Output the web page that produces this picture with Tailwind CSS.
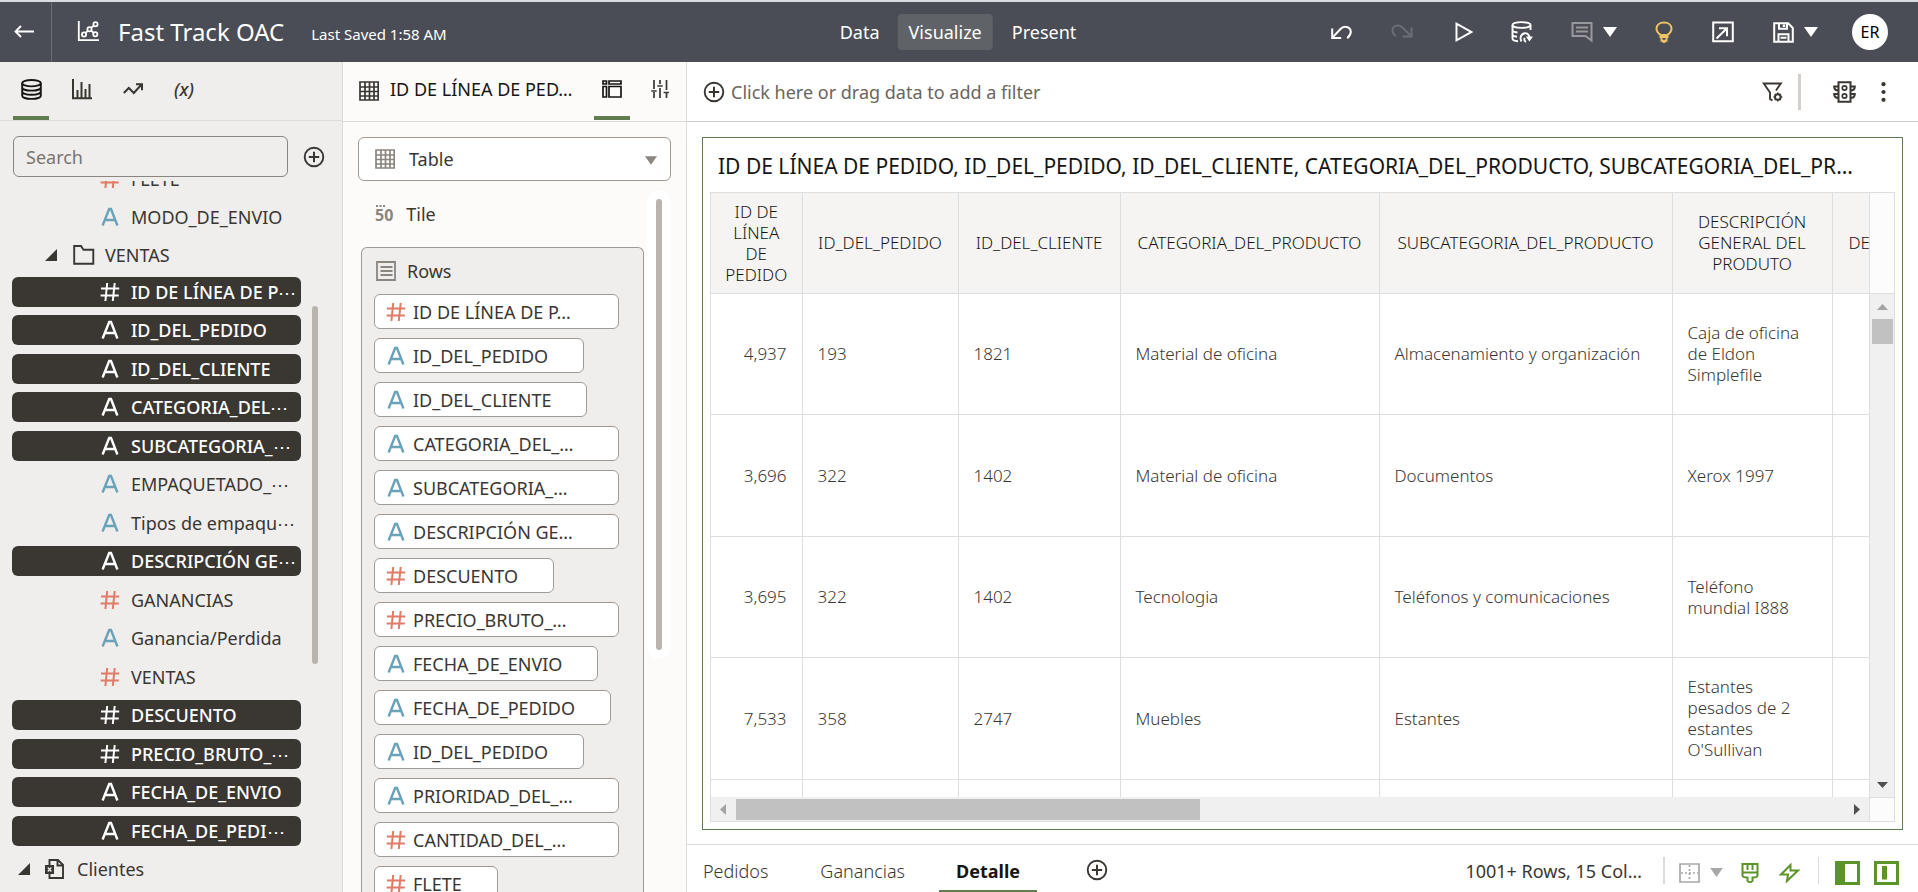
<!DOCTYPE html>
<html lang="es">
<head>
<meta charset="utf-8">
<title>Fast Track OAC</title>
<script src="https://cdn.jsdelivr.net/npm/@tailwindcss/browser@4"></script>
</head>
<body class="h-screen overflow-hidden flex flex-col bg-white font-['Noto_Sans','Open_Sans',sans-serif] text-[18px] leading-6 text-[#3a3632]">
<svg class="hidden" aria-hidden="true">
  <symbol id="i-text" viewBox="0 0 20 20"><path d="M2.600 18.500 9.200 2h1.800l6.400 16.500M5.200 13h9.800" fill="none" stroke="currentColor" stroke-width="2.400"/></symbol>
  <symbol id="i-num" viewBox="0 0 20 20"><path d="M7.200 1 5.400 19M14.700 1l-1.900 18M1 6.600h18.200M.6 13.600h18.200" fill="none" stroke="currentColor" stroke-width="2"/></symbol>
  <symbol id="i-grid" viewBox="0 0 20 20"><path d="M1 1h18.200v18H1zM6 1v18M10.500 1v18M15 1v18M1 6h18M1 10.500h18M1 15h18" fill="none" stroke="currentColor" stroke-width="1.700"/></symbol>
  <symbol id="i-plus" viewBox="0 0 22 22"><circle cx="11" cy="11" r="9.300" fill="none" stroke="currentColor" stroke-width="1.900"/><path d="M11 5.800v10.400M5.800 11h10.400" stroke="currentColor" stroke-width="2"/></symbol>
  <symbol id="i-open" viewBox="0 0 12 12"><path d="M12 0v12H0z" fill="currentColor"/></symbol>
  <symbol id="i-down" viewBox="0 0 14 10"><path d="M0 0h14L7 10z" fill="currentColor"/></symbol>
</svg>

<div class="h-0.5 shrink-0 bg-[#d9dbe1]"></div>
<header class="h-[60px] shrink-0 bg-[#4a4d55] text-white flex items-center relative">
  <button aria-label="Back" class="w-[52px] h-full border-r border-[#6b6e74] flex items-center pl-3.5">
    <svg class="w-5 h-4" viewBox="0 0 20 16" fill="none" stroke="currentColor" stroke-width="1.900"><path d="M20 7.500H1.500M7 2 1.500 7.500 7 13"/></svg>
  </button>
  <svg class="w-[22px] h-[22px] ml-[25px]" viewBox="0 0 22 22" fill="none" stroke="currentColor" stroke-width="1.800"><path d="M1.800 0v19.200H22"/><circle cx="7" cy="13.500" r="2.100"/><circle cx="12.500" cy="8.200" r="2.100"/><circle cx="18.500" cy="3.300" r="2.100"/><circle cx="18.300" cy="13.300" r="2.100"/><path d="m8.500 12 2.500-2.300M14.200 6.800l2.600-2.200M14.200 9.700l2.500 2.200"/></svg>
  <h1 class="ml-[19px] text-[24px] leading-8">Fast Track OAC</h1>
  <span class="ml-[27px] mt-1 text-[15px]">Last Saved 1:58 AM</span>
  <nav class="absolute left-1/2 -translate-x-1/2 flex items-center">
    <button class="h-9 px-3 mr-1.5">Data</button>
    <button class="h-9 px-[11px] mr-[7px] rounded bg-[#5f6267]">Visualize</button>
    <button class="h-9 pl-3 pr-3.5">Present</button>
  </nav>
  <div class="ml-auto mr-[30px] flex items-center">
    <button aria-label="Undo" class="mr-[39px]"><svg class="w-[21px] h-5" viewBox="0 0 21 20" fill="none" stroke="currentColor" stroke-width="2"><path d="M1.200 6.500v9.500h9M1.500 15.600 9 7.500c4-4.500 10.500-3 10.800 2.200.1 2.500-1.400 4.500-3.600 6.500"/></svg></button>
    <button aria-label="Redo" class="mr-[42px] text-[#6b6e74]"><svg class="w-[22px] h-5" viewBox="0 0 22 20" fill="none" stroke="currentColor" stroke-width="2"><path d="M20.500 5.500v9h-9M20 14 12 6C8 1.500 1.800 3.300 1.500 8.500c0 2.300 1.300 4 3.300 5.700"/></svg></button>
    <button aria-label="Run" class="mr-[38px]"><svg class="w-[18px] h-5" viewBox="0 0 18 20" fill="none" stroke="currentColor" stroke-width="2"><path d="M1.500 1.700v16.600L16.200 10z"/></svg></button>
    <button aria-label="Refresh data" class="mr-[38px]"><svg class="w-[22px] h-[22px]" viewBox="0 0 22 22" fill="none" stroke="currentColor" stroke-width="1.900"><ellipse cx="10.500" cy="4" rx="9" ry="2.900"/><path d="M1.500 4v13.500c0 1.500 2 2.500 5.500 2.800M19.500 4v5M1.500 9c0 1.400 2.500 2.200 5 2.500M1.500 13.500c0 1.200 2 2 4.500 2.300"/><path d="M10.500 20.500c-2-3.500-.5-8 3.500-8.300 3-.2 4.500 2 4.500 5.300M15 20.800c-1.800-.8-2-2.500-1.300-4"/><path d="M14.800 15.500h7.200l-3.600 5z" fill="currentColor" stroke="none"/></svg></button>
    <button aria-label="Notes" class="flex items-center gap-[10px] mr-[38px]"><svg class="w-[22px] h-[22px] text-[#97999d]" viewBox="0 0 22 22" fill="none" stroke="currentColor" stroke-width="2"><path d="M1.500 2h19v17.500L14.500 15h-13zM5 6.500h12M5 10.500h12"/></svg><svg class="w-3.5 h-2.5"><use href="#i-down"/></svg></button>
    <button aria-label="Insights" class="mr-[39px] text-[#efc463]"><svg class="w-[18px] h-[22px]" viewBox="0 0 18 22" fill="none" stroke="currentColor" stroke-width="2"><path d="M5.500 14C3 12 1.500 10.300 1.500 7.700 1.500 4 4.700 1.500 9 1.500s7.500 2.500 7.500 6.200c0 2.600-1.500 4.300-4 6.300zM5.500 14v2h7v-2M6.500 16.500v3.300h5v-3.300"/><path d="M7.500 20.500h3" stroke-width="3"/></svg></button>
    <button aria-label="Export" class="mr-[39px]"><svg class="w-[22px] h-[22px]" viewBox="0 0 22 22" fill="none" stroke="currentColor" stroke-width="2"><path d="M1.200 1.500h19.600v18.800H1.200zM7 7.200h8v8M15 7.200 4.500 17.500"/></svg></button>
    <button aria-label="Save" class="flex items-center gap-[10px] mr-[34px]"><svg class="w-[21px] h-[21px]" viewBox="0 0 21 21" fill="none" stroke="currentColor" stroke-width="2"><path d="M1.200 1.200h14L19.800 6v13.700H1.200zM6 1.200v5.600h8V1.200M5.500 19.700v-7.500h10v7.500M7.500 15.800h6"/><path d="M11 2.500v2.500" stroke-width="2.500"/></svg><svg class="w-3.5 h-2.5"><use href="#i-down"/></svg></button>
    <button class="w-9 h-9 rounded-full bg-white text-black text-[16px]">ER</button>
  </div>
</header>

<div class="flex-1 min-h-0 flex">
  <aside class="w-[343px] shrink-0 bg-[#efeeed] border-r border-[#dddbd9] flex flex-col">
    <div class="h-[59px] shrink-0 border-b border-[#dddbd9] flex px-[13px]">
      <button aria-label="Data" class="w-9 border-b-4 border-[#5f7d4f] flex items-center justify-center text-[#161513]"><svg class="w-[21px] h-[21px]" viewBox="0 0 21 21" fill="none" stroke="currentColor" stroke-width="1.900"><ellipse cx="10.500" cy="4.200" rx="9.300" ry="3.200"/><path d="M1.200 4.200v12.500c0 1.800 4.100 3.200 9.300 3.200s9.300-1.400 9.300-3.200V4.200M1.200 8.400c0 1.800 4.100 3.200 9.300 3.200s9.300-1.400 9.300-3.200M1.200 12.600c0 1.800 4.100 3.200 9.300 3.200s9.300-1.400 9.300-3.200"/></svg></button>
      <button aria-label="Visualizations" class="w-9 ml-[15px] border-b-4 border-transparent flex items-center justify-center"><svg class="w-5 h-[21px]" viewBox="0 0 20 21" fill="none" stroke="currentColor" stroke-width="2"><path d="M1 0v19.200h19M5.500 19v-8M9.500 19V3M13.500 19v-9M17.500 19V5"/></svg></button>
      <button aria-label="Analytics" class="w-9 ml-[15px] border-b-4 border-transparent flex items-center justify-center"><svg class="w-5 h-3" viewBox="0 0 20 12" fill="none" stroke="currentColor" stroke-width="2"><path d="m.8 10 5-5 5 5 8-8.700M13 1.200h6v6"/></svg></button>
      <button aria-label="Parameters" class="w-9 ml-[15px] border-b-4 border-transparent flex items-center justify-center italic font-medium">(x)</button>
    </div>
    <div class="px-[13px] pt-[15px] shrink-0 flex items-center">
      <input aria-label="Search" placeholder="Search" class="w-[275px] h-[41px] rounded-md border border-[#8b8580] bg-transparent px-3 outline-none placeholder:text-[#7a7570]">
      <button aria-label="Add data" class="ml-[15px]"><svg class="w-[22px] h-[22px]"><use href="#i-plus"/></svg></button>
    </div>
    <div class="mt-1 flex-1 min-h-0 overflow-hidden flex">
      <div class="w-[301px] pl-3 shrink-0 flex flex-col">
        <div class="h-[96px] pb-[3px] shrink-0 flex flex-col justify-end">
          <button class="h-[38px] shrink-0 pl-[88px] flex items-center"><svg class="w-5 h-5 mr-[11px] text-[#e07b68]"><use href="#i-num"/></svg>FLETE</button>
          <button class="h-[38px] shrink-0 pl-[88px] flex items-center"><svg class="w-5 h-5 mr-[11px] text-[#6aa2ba]"><use href="#i-text"/></svg>MODO_DE_ENVIO</button>
          <button class="h-[38px] shrink-0 pl-[33px] flex items-center"><svg class="w-3 h-3 mr-4"><use href="#i-open"/></svg><svg class="w-[22px] h-5 mr-2.5" viewBox="0 0 22 20" fill="none" stroke="currentColor" stroke-width="1.900"><path d="M1.200 1H8l2.500 3.700h9.800v14.100H1.200z"/></svg>VENTAS</button>
        </div>
        <div class="flex flex-col">
          <button class="h-[30px] mb-2 even:mb-[9px] pl-[88px] rounded-md bg-[#3a3632] text-white font-medium whitespace-nowrap flex items-center"><svg class="w-5 h-5 mr-[11px]"><use href="#i-num"/></svg>ID DE LÍNEA DE P⋯</button>
          <button class="h-[30px] mb-2 even:mb-[9px] pl-[88px] rounded-md bg-[#3a3632] text-white font-medium whitespace-nowrap flex items-center"><svg class="w-5 h-5 mr-[11px]"><use href="#i-text"/></svg>ID_DEL_PEDIDO</button>
          <button class="h-[30px] mb-2 even:mb-[9px] pl-[88px] rounded-md bg-[#3a3632] text-white font-medium whitespace-nowrap flex items-center"><svg class="w-5 h-5 mr-[11px]"><use href="#i-text"/></svg>ID_DEL_CLIENTE</button>
          <button class="h-[30px] mb-2 even:mb-[9px] pl-[88px] rounded-md bg-[#3a3632] text-white font-medium whitespace-nowrap flex items-center"><svg class="w-5 h-5 mr-[11px]"><use href="#i-text"/></svg>CATEGORIA_DEL⋯</button>
          <button class="h-[30px] mb-2 even:mb-[9px] pl-[88px] rounded-md bg-[#3a3632] text-white font-medium whitespace-nowrap flex items-center"><svg class="w-5 h-5 mr-[11px]"><use href="#i-text"/></svg>SUBCATEGORIA_⋯</button>
          <button class="h-[30px] mb-2 even:mb-[9px] pl-[88px] whitespace-nowrap flex items-center"><svg class="w-5 h-5 mr-[11px] text-[#6aa2ba]"><use href="#i-text"/></svg>EMPAQUETADO_⋯</button>
          <button class="h-[30px] mb-2 even:mb-[9px] pl-[88px] whitespace-nowrap flex items-center"><svg class="w-5 h-5 mr-[11px] text-[#6aa2ba]"><use href="#i-text"/></svg>Tipos de empaqu⋯</button>
          <button class="h-[30px] mb-2 even:mb-[9px] pl-[88px] rounded-md bg-[#3a3632] text-white font-medium whitespace-nowrap flex items-center"><svg class="w-5 h-5 mr-[11px]"><use href="#i-text"/></svg>DESCRIPCIÓN GE⋯</button>
          <button class="h-[30px] mb-2 even:mb-[9px] pl-[88px] whitespace-nowrap flex items-center"><svg class="w-5 h-5 mr-[11px] text-[#e07b68]"><use href="#i-num"/></svg>GANANCIAS</button>
          <button class="h-[30px] mb-2 even:mb-[9px] pl-[88px] whitespace-nowrap flex items-center"><svg class="w-5 h-5 mr-[11px] text-[#6aa2ba]"><use href="#i-text"/></svg>Ganancia/Perdida</button>
          <button class="h-[30px] mb-2 even:mb-[9px] pl-[88px] whitespace-nowrap flex items-center"><svg class="w-5 h-5 mr-[11px] text-[#e07b68]"><use href="#i-num"/></svg>VENTAS</button>
          <button class="h-[30px] mb-2 even:mb-[9px] pl-[88px] rounded-md bg-[#3a3632] text-white font-medium whitespace-nowrap flex items-center"><svg class="w-5 h-5 mr-[11px]"><use href="#i-num"/></svg>DESCUENTO</button>
          <button class="h-[30px] mb-2 even:mb-[9px] pl-[88px] rounded-md bg-[#3a3632] text-white font-medium whitespace-nowrap flex items-center"><svg class="w-5 h-5 mr-[11px]"><use href="#i-num"/></svg>PRECIO_BRUTO_⋯</button>
          <button class="h-[30px] mb-2 even:mb-[9px] pl-[88px] rounded-md bg-[#3a3632] text-white font-medium whitespace-nowrap flex items-center"><svg class="w-5 h-5 mr-[11px]"><use href="#i-text"/></svg>FECHA_DE_ENVIO</button>
          <button class="h-[30px] mb-2 even:mb-[9px] pl-[88px] rounded-md bg-[#3a3632] text-white font-medium whitespace-nowrap flex items-center"><svg class="w-5 h-5 mr-[11px]"><use href="#i-text"/></svg>FECHA_DE_PEDI⋯</button>
          <button class="h-[30px] pl-1.5 flex items-center"><svg class="w-3 h-3 mr-[15px]"><use href="#i-open"/></svg><svg class="w-5 h-5 mr-3" viewBox="0 0 20 20" fill="none" stroke="currentColor" stroke-width="1.900"><path d="M4.500 6V1H13l5 5v13H4.500v-4M12.500 1v5.500H18"/><path d="M0 6h9v9H0z" fill="currentColor" stroke="none"/><path d="m2.800 8.500 3.600 4M6.400 8.500l-3.600 4" stroke="#efeeed" stroke-width="1.300"/></svg>Clientes</button>
        </div>
      </div>
      <div class="ml-[11px] mt-[125px] w-1.5 h-[358px] rounded-full bg-[#bab4af]"></div>
    </div>
  </aside>

  <section class="w-[344px] shrink-0 bg-[#fcfbfa] border-r border-[#dddbd9] flex flex-col">
    <div class="h-[60px] shrink-0 border-b border-[#dddbd9] flex pl-4">
      <svg class="w-5 h-5 mt-[19px] mr-[11px] shrink-0"><use href="#i-grid"/></svg>
      <h2 class="mt-[15px] w-[204px] whitespace-nowrap text-[#161513]">ID DE LÍNEA DE PED…</h2>
      <button aria-label="Grammar" class="w-9 h-[58px] border-b-4 border-[#5f7d4f] flex items-center justify-center text-[#161513]"><svg class="w-5 h-[18px]" viewBox="0 0 20 18" fill="none" stroke="currentColor" stroke-width="1.700"><path d="M1 1h3.500v3H1zM7 1h12v3H7zM1 6.500h3.500V17H1zM7 6.500h12V17H7z"/></svg></button>
      <button aria-label="Properties" class="ml-[21px] h-[54px] flex items-center"><svg class="w-[18px] h-[18px]" viewBox="0 0 18 18" fill="none" stroke="currentColor" stroke-width="1.700"><path d="M3 0v9M3 12v6M9 0v4M9 8v10M15.500 0v10M15.500 13v5M.3 11h5.400M6.300 6h5.400M12.600 12.500H18"/></svg></button>
    </div>
    <div class="relative mt-[15px] mx-[15px] shrink-0">
      <select aria-label="Visualization type" class="appearance-none block w-full h-11 rounded-md border border-[#a09a95] bg-white pl-[50px]"><option>Table</option></select>
      <svg class="absolute left-[17px] top-3 w-5 h-5 text-[#8b8580]"><use href="#i-grid"/></svg>
      <svg class="absolute right-[14px] top-[19px] w-3 h-[9px] text-[#8b8580]" viewBox="0 0 14 10"><path d="M0 0h14L7 10z" fill="currentColor"/></svg>
    </div>
    <div class="mt-2 flex-1 min-h-0 overflow-hidden flex">
      <div class="ml-[18px] w-[283px] shrink-0 flex flex-col">
        <button class="h-[58px] pb-2 pl-3.5 shrink-0 flex items-center"><span class="mr-[13px] flex flex-col text-[16px] leading-4 font-bold text-[#8b8580]"><svg class="w-2.5 h-0.5" viewBox="0 0 10 2"><path d="M1 1h2M4.500 1h2M8 1h2" stroke="currentColor" stroke-width="2"/></svg>50</span>Tile</button>
        <div class="flex-none rounded-t-md border border-b-0 border-[#a09a95] bg-[#efeeed] pl-3 pb-6">
          <h3 class="h-[46px] flex items-center pb-px"><svg class="w-5 h-5 mr-[11px] ml-0.5 text-[#8b8580]" viewBox="0 0 20 20" fill="none" stroke="currentColor" stroke-width="1.800"><path d="M1 1h18v18H1zM4.500 6h12M4.500 10h12M4.500 14h12"/></svg>Rows</h3>
          <div class="flex flex-col items-start gap-[9px] whitespace-nowrap">
            <button class="w-[245px] h-[35px] rounded-md border border-[#a09a95] bg-white pl-[11px] flex items-center"><svg class="w-5 h-5 mr-[7px] text-[#e07b68]"><use href="#i-num"/></svg>ID DE LÍNEA DE P…</button>
            <button class="h-[35px] rounded-md border border-[#a09a95] bg-white pl-[11px] pr-[35px] flex items-center"><svg class="w-5 h-5 mr-[7px] text-[#6aa2ba]"><use href="#i-text"/></svg>ID_DEL_PEDIDO</button>
            <button class="h-[35px] rounded-md border border-[#a09a95] bg-white pl-[11px] pr-[35px] flex items-center"><svg class="w-5 h-5 mr-[7px] text-[#6aa2ba]"><use href="#i-text"/></svg>ID_DEL_CLIENTE</button>
            <button class="w-[245px] h-[35px] rounded-md border border-[#a09a95] bg-white pl-[11px] flex items-center"><svg class="w-5 h-5 mr-[7px] text-[#6aa2ba]"><use href="#i-text"/></svg>CATEGORIA_DEL_…</button>
            <button class="w-[245px] h-[35px] rounded-md border border-[#a09a95] bg-white pl-[11px] flex items-center"><svg class="w-5 h-5 mr-[7px] text-[#6aa2ba]"><use href="#i-text"/></svg>SUBCATEGORIA_…</button>
            <button class="w-[245px] h-[35px] rounded-md border border-[#a09a95] bg-white pl-[11px] flex items-center"><svg class="w-5 h-5 mr-[7px] text-[#6aa2ba]"><use href="#i-text"/></svg>DESCRIPCIÓN GE…</button>
            <button class="h-[35px] rounded-md border border-[#a09a95] bg-white pl-[11px] pr-[35px] flex items-center"><svg class="w-5 h-5 mr-[7px] text-[#e07b68]"><use href="#i-num"/></svg>DESCUENTO</button>
            <button class="w-[245px] h-[35px] rounded-md border border-[#a09a95] bg-white pl-[11px] flex items-center"><svg class="w-5 h-5 mr-[7px] text-[#e07b68]"><use href="#i-num"/></svg>PRECIO_BRUTO_…</button>
            <button class="h-[35px] rounded-md border border-[#a09a95] bg-white pl-[11px] pr-[35px] flex items-center"><svg class="w-5 h-5 mr-[7px] text-[#6aa2ba]"><use href="#i-text"/></svg>FECHA_DE_ENVIO</button>
            <button class="h-[35px] rounded-md border border-[#a09a95] bg-white pl-[11px] pr-[35px] flex items-center"><svg class="w-5 h-5 mr-[7px] text-[#6aa2ba]"><use href="#i-text"/></svg>FECHA_DE_PEDIDO</button>
            <button class="h-[35px] rounded-md border border-[#a09a95] bg-white pl-[11px] pr-[35px] flex items-center"><svg class="w-5 h-5 mr-[7px] text-[#6aa2ba]"><use href="#i-text"/></svg>ID_DEL_PEDIDO</button>
            <button class="w-[245px] h-[35px] rounded-md border border-[#a09a95] bg-white pl-[11px] flex items-center"><svg class="w-5 h-5 mr-[7px] text-[#6aa2ba]"><use href="#i-text"/></svg>PRIORIDAD_DEL_…</button>
            <button class="w-[245px] h-[35px] rounded-md border border-[#a09a95] bg-white pl-[11px] flex items-center"><svg class="w-5 h-5 mr-[7px] text-[#e07b68]"><use href="#i-num"/></svg>CANTIDAD_DEL_…</button>
            <button class="h-[35px] rounded-md border border-[#a09a95] bg-white pl-[11px] pr-[35px] flex items-center"><svg class="w-5 h-5 mr-[7px] text-[#e07b68]"><use href="#i-num"/></svg>FLETE</button>
          </div>
        </div>
      </div>
      <div class="ml-[3px] mt-px w-6 h-[469px] rounded-full bg-white flex justify-center py-[9px]"><div class="w-1.5 rounded-full bg-[#bab4af]"></div></div>
    </div>
  </section>

  <main class="flex-1 min-w-0 flex flex-col">
    <div class="h-[60px] shrink-0 border-b border-[#cfcdcb] flex items-center pl-4 pr-8">
      <button class="flex items-center gap-1.5 text-[#6a6560]"><svg class="w-[22px] h-[22px] text-[#3a3632]"><use href="#i-plus"/></svg>Click here or drag data to add a filter</button>
      <button aria-label="Filter settings" class="ml-auto"><svg class="w-[22px] h-5" viewBox="0 0 22 20" fill="none" stroke="currentColor" stroke-width="1.900"><path d="M10.500 18.500 8 17v-6.500L1.800 1.500h17L14 8.500"/><circle cx="15.800" cy="15" r="2.800"/><path d="M15.800 10.500v2M15.800 17.500v2M11.500 15h2M18 15h2.300M12.800 12l1.300 1.300M17.600 16.600l1.300 1.300M18.900 12l-1.300 1.300M12.800 18l1.300-1.300" stroke-width="1.500"/></svg></button>
      <div class="ml-3.5 w-[3px] h-9 bg-[#d4cfca]"></div>
      <button aria-label="Auto apply" class="ml-8"><svg class="w-[23px] h-[22px]" viewBox="0 0 23 22" fill="none" stroke="currentColor" stroke-width="2"><path d="M5.500 1.200h12v19.600h-12zM5.500 5.500H1.200c0 2.500 1.300 4 4.300 4M5.500 13H1.200c0 2.500 1.300 4 4.300 4M17.500 5.500h4.300c0 2.500-1.300 4-4.300 4M17.500 13h4.300c0 2.500-1.300 4-4.300 4"/><circle cx="11.500" cy="7" r="2.200" stroke-width="1.700"/><circle cx="11.500" cy="15" r="2.200" stroke-width="1.700"/></svg></button>
      <button aria-label="Menu" class="ml-[25px]"><svg class="w-[5px] h-5" viewBox="0 0 5 20" fill="currentColor"><circle cx="2.500" cy="2.200" r="2.100"/><circle cx="2.500" cy="10" r="2.100"/><circle cx="2.500" cy="17.800" r="2.100"/></svg></button>
    </div>
    <div class="flex-1 min-h-0 pt-[15px] pl-[15px] pr-[15px] pb-3.5">
      <article class="h-full border border-[#5f7d4f] flex flex-col pb-[7px] px-[7px]">
        <h2 class="h-[54px] shrink-0 pl-2 pt-3 text-[21px] leading-8 whitespace-nowrap text-[#161513]">ID DE LÍNEA DE PEDIDO, ID_DEL_PEDIDO, ID_DEL_CLIENTE, CATEGORIA_DEL_PRODUCTO, SUBCATEGORIA_DEL_PR…</h2>
        <div class="flex-1 min-h-0 border border-[#dcdedf] grid grid-cols-[1fr_25px] grid-rows-[1fr_24px]">
          <div class="overflow-hidden min-w-0 min-h-0">
            <table class="table-fixed w-[1319px] border-collapse text-[17px] leading-[21px] font-light">
              <colgroup><col class="w-[91px]"><col class="w-[156px]"><col class="w-[162px]"><col class="w-[259px]"><col class="w-[293px]"><col class="w-[160px]"><col></colgroup>
              <thead>
                <tr class="h-[100px] bg-[#f5f4f2] border-b border-[#dcdedf] text-[#161513]">
                  <th class="px-3 font-light border-r border-[#dcdedf]">ID DE LÍNEA DE PEDIDO</th>
                  <th class="px-1 font-light border-r border-[#dcdedf]">ID_DEL_PEDIDO</th>
                  <th class="px-1 font-light border-r border-[#dcdedf]">ID_DEL_CLIENTE</th>
                  <th class="px-1 font-light border-r border-[#dcdedf]">CATEGORIA_DEL_PRODUCTO</th>
                  <th class="px-1 font-light border-r border-[#dcdedf]">SUBCATEGORIA_DEL_PRODUCTO</th>
                  <th class="px-3 font-light border-r border-[#dcdedf]">DESCRIPCIÓN GENERAL DEL PRODUTO</th>
                  <th class="px-4 font-light text-left">DESCUENTO</th>
                </tr>
              </thead>
              <tbody>
                <tr class="h-[121px] border-b border-[#dcdedf]">
                  <td class="px-[15px] border-r border-[#dcdedf] text-right">4,937</td><td class="px-[15px] border-r border-[#dcdedf]">193</td><td class="px-[15px] border-r border-[#dcdedf]">1821</td><td class="px-[15px] border-r border-[#dcdedf]">Material de oficina</td><td class="px-[15px] border-r border-[#dcdedf]">Almacenamiento y organización</td><td class="px-[15px] border-r border-[#dcdedf]">Caja de oficina de Eldon Simplefile</td><td></td>
                </tr>
                <tr class="h-[122px] border-b border-[#dcdedf]">
                  <td class="px-[15px] border-r border-[#dcdedf] text-right">3,696</td><td class="px-[15px] border-r border-[#dcdedf]">322</td><td class="px-[15px] border-r border-[#dcdedf]">1402</td><td class="px-[15px] border-r border-[#dcdedf]">Material de oficina</td><td class="px-[15px] border-r border-[#dcdedf]">Documentos</td><td class="px-[15px] border-r border-[#dcdedf]">Xerox 1997</td><td></td>
                </tr>
                <tr class="h-[121px] border-b border-[#dcdedf]">
                  <td class="px-[15px] border-r border-[#dcdedf] text-right">3,695</td><td class="px-[15px] border-r border-[#dcdedf]">322</td><td class="px-[15px] border-r border-[#dcdedf]">1402</td><td class="px-[15px] border-r border-[#dcdedf]">Tecnologia</td><td class="px-[15px] border-r border-[#dcdedf]">Teléfonos y comunicaciones</td><td class="px-[15px] border-r border-[#dcdedf]">Teléfono mundial I888</td><td></td>
                </tr>
                <tr class="h-[122px] border-b border-[#dcdedf]">
                  <td class="px-[15px] border-r border-[#dcdedf] text-right">7,533</td><td class="px-[15px] border-r border-[#dcdedf]">358</td><td class="px-[15px] border-r border-[#dcdedf]">2747</td><td class="px-[15px] border-r border-[#dcdedf]">Muebles</td><td class="px-[15px] border-r border-[#dcdedf]">Estantes</td><td class="px-[15px] border-r border-[#dcdedf]">Estantes pesados de 2 estantes O'Sullivan</td><td></td>
                </tr>
                <tr class="h-[121px]">
                  <td class="border-r border-[#dcdedf]"></td><td class="border-r border-[#dcdedf]"></td><td class="border-r border-[#dcdedf]"></td><td class="border-r border-[#dcdedf]"></td><td class="border-r border-[#dcdedf]"></td><td class="border-r border-[#dcdedf]"></td><td></td>
                </tr>
              </tbody>
            </table>
          </div>
          <div class="min-h-0 flex flex-col border-l border-[#dcdedf]">
            <div class="h-[101px] shrink-0 bg-[#fcfcfc] border-b border-[#dcdedf]"></div>
            <div class="flex-1 min-h-0 bg-[#f0f0f0] flex flex-col items-center pt-[10px] pb-[9px]">
              <svg class="w-[11px] h-1.5 shrink-0 text-[#a3a3a3]" viewBox="0 0 11 6"><path d="M5.500 0 11 6H0z" fill="currentColor"/></svg>
              <div class="mt-[9px] w-[21px] h-[25px] shrink-0 bg-[#c1c1c1]"></div>
              <svg class="mt-auto w-[11px] h-1.5 shrink-0 text-[#505050]" viewBox="0 0 11 6"><path d="M0 0h11L5.500 6z" fill="currentColor"/></svg>
            </div>
          </div>
          <div class="bg-[#f0f0f0] flex items-center px-[9px]">
            <svg class="w-1.5 h-[11px] mr-[10px] text-[#a3a3a3]" viewBox="0 0 6 11"><path d="M6 0v11L0 5.500z" fill="currentColor"/></svg>
            <div class="w-2/5 grow-0 pr-2 box-content h-[21px] bg-[#c1c1c1]"></div>
            <svg class="ml-auto w-1.5 h-[11px] text-[#505050]" viewBox="0 0 6 11"><path d="M0 0v11l6-5.500z" fill="currentColor"/></svg>
          </div>
          <div class="bg-[#fcfcfc] border-l border-t border-[#dcdedf]"></div>
        </div>
      </article>
    </div>
    <footer class="h-12 shrink-0 border-t border-[#dddbd9] flex items-stretch pr-[19px]">
      <nav class="flex">
        <button class="ml-4 pt-1 font-light">Pedidos</button>
        <button class="ml-[52px] pt-1 font-light">Ganancias</button>
        <button class="ml-[34px] px-[17px] border-b-2 border-[#5f7d4f] pt-1.5 font-bold text-[#161513]">Detalle</button>
        <button aria-label="Add canvas" class="ml-[49px] pt-0.5"><svg class="w-[22px] h-[22px]"><use href="#i-plus"/></svg></button>
      </nav>
      <div class="ml-auto flex items-center pt-2">
        <span class="text-[#3a3632] pb-1">1001+ Rows, 15 Col…</span>
        <div class="ml-[21px] w-0.5 h-[27px] mb-1 bg-[#dddbd9]"></div>
        <button aria-label="Grid" class="ml-3.5 flex items-center gap-[10px] text-[#aaa8a6]"><svg class="w-[21px] h-5" viewBox="0 0 21 20" fill="none" stroke="currentColor" stroke-width="1.700"><path d="M1 1h19v18H1z"/><path d="M10.500 2v16M2 10h17" stroke-dasharray="2 2"/></svg><svg class="w-[13px] h-[9px]" viewBox="0 0 14 10"><path d="M0 0h14L7 10z" fill="currentColor"/></svg></button>
        <button aria-label="Brushing" class="ml-[18px] text-[#5b9428]"><svg class="w-[18px] h-5" viewBox="0 0 18 20" fill="none" stroke="currentColor" stroke-width="2"><path d="M1.500 1h15v11.500c0 1.500-2.500 2-5 2V18l-2.500 1.500L6.500 18v-3.500c-2.500 0-5-.5-5-2zM1.500 9.500h15M6.500 1v6M11.500 1v6"/></svg></button>
        <button aria-label="Auto run" class="ml-5 text-[#5b9428]"><svg class="w-[21px] h-5" viewBox="0 0 21 20" fill="none" stroke="currentColor" stroke-width="2"><path d="M11.500 2 2 11.500h7L8 18l11-10.500h-7.500z"/></svg></button>
        <div class="ml-[18px] w-px h-[27px] mb-1 bg-[#dddbd9]"></div>
        <button aria-label="Toggle data panel" class="ml-4 text-[#5b9428]"><svg class="w-[25px] h-6" viewBox="0 0 25 24" fill="none" stroke="currentColor" stroke-width="3"><path d="M1.500 1.500h22v21h-22z" fill="#fff"/><path d="M1 1h9v22H1z" fill="currentColor" stroke="none"/></svg></button>
        <button aria-label="Toggle grammar panel" class="ml-3.5 text-[#5b9428]"><svg class="w-[25px] h-6" viewBox="0 0 25 24" fill="none" stroke="currentColor" stroke-width="3"><path d="M1.500 1.500h22v21h-22z"/><path d="M10.500 5v13.500" stroke-width="5"/></svg></button>
      </div>
    </footer>
  </main>
</div>
</body>
</html>
